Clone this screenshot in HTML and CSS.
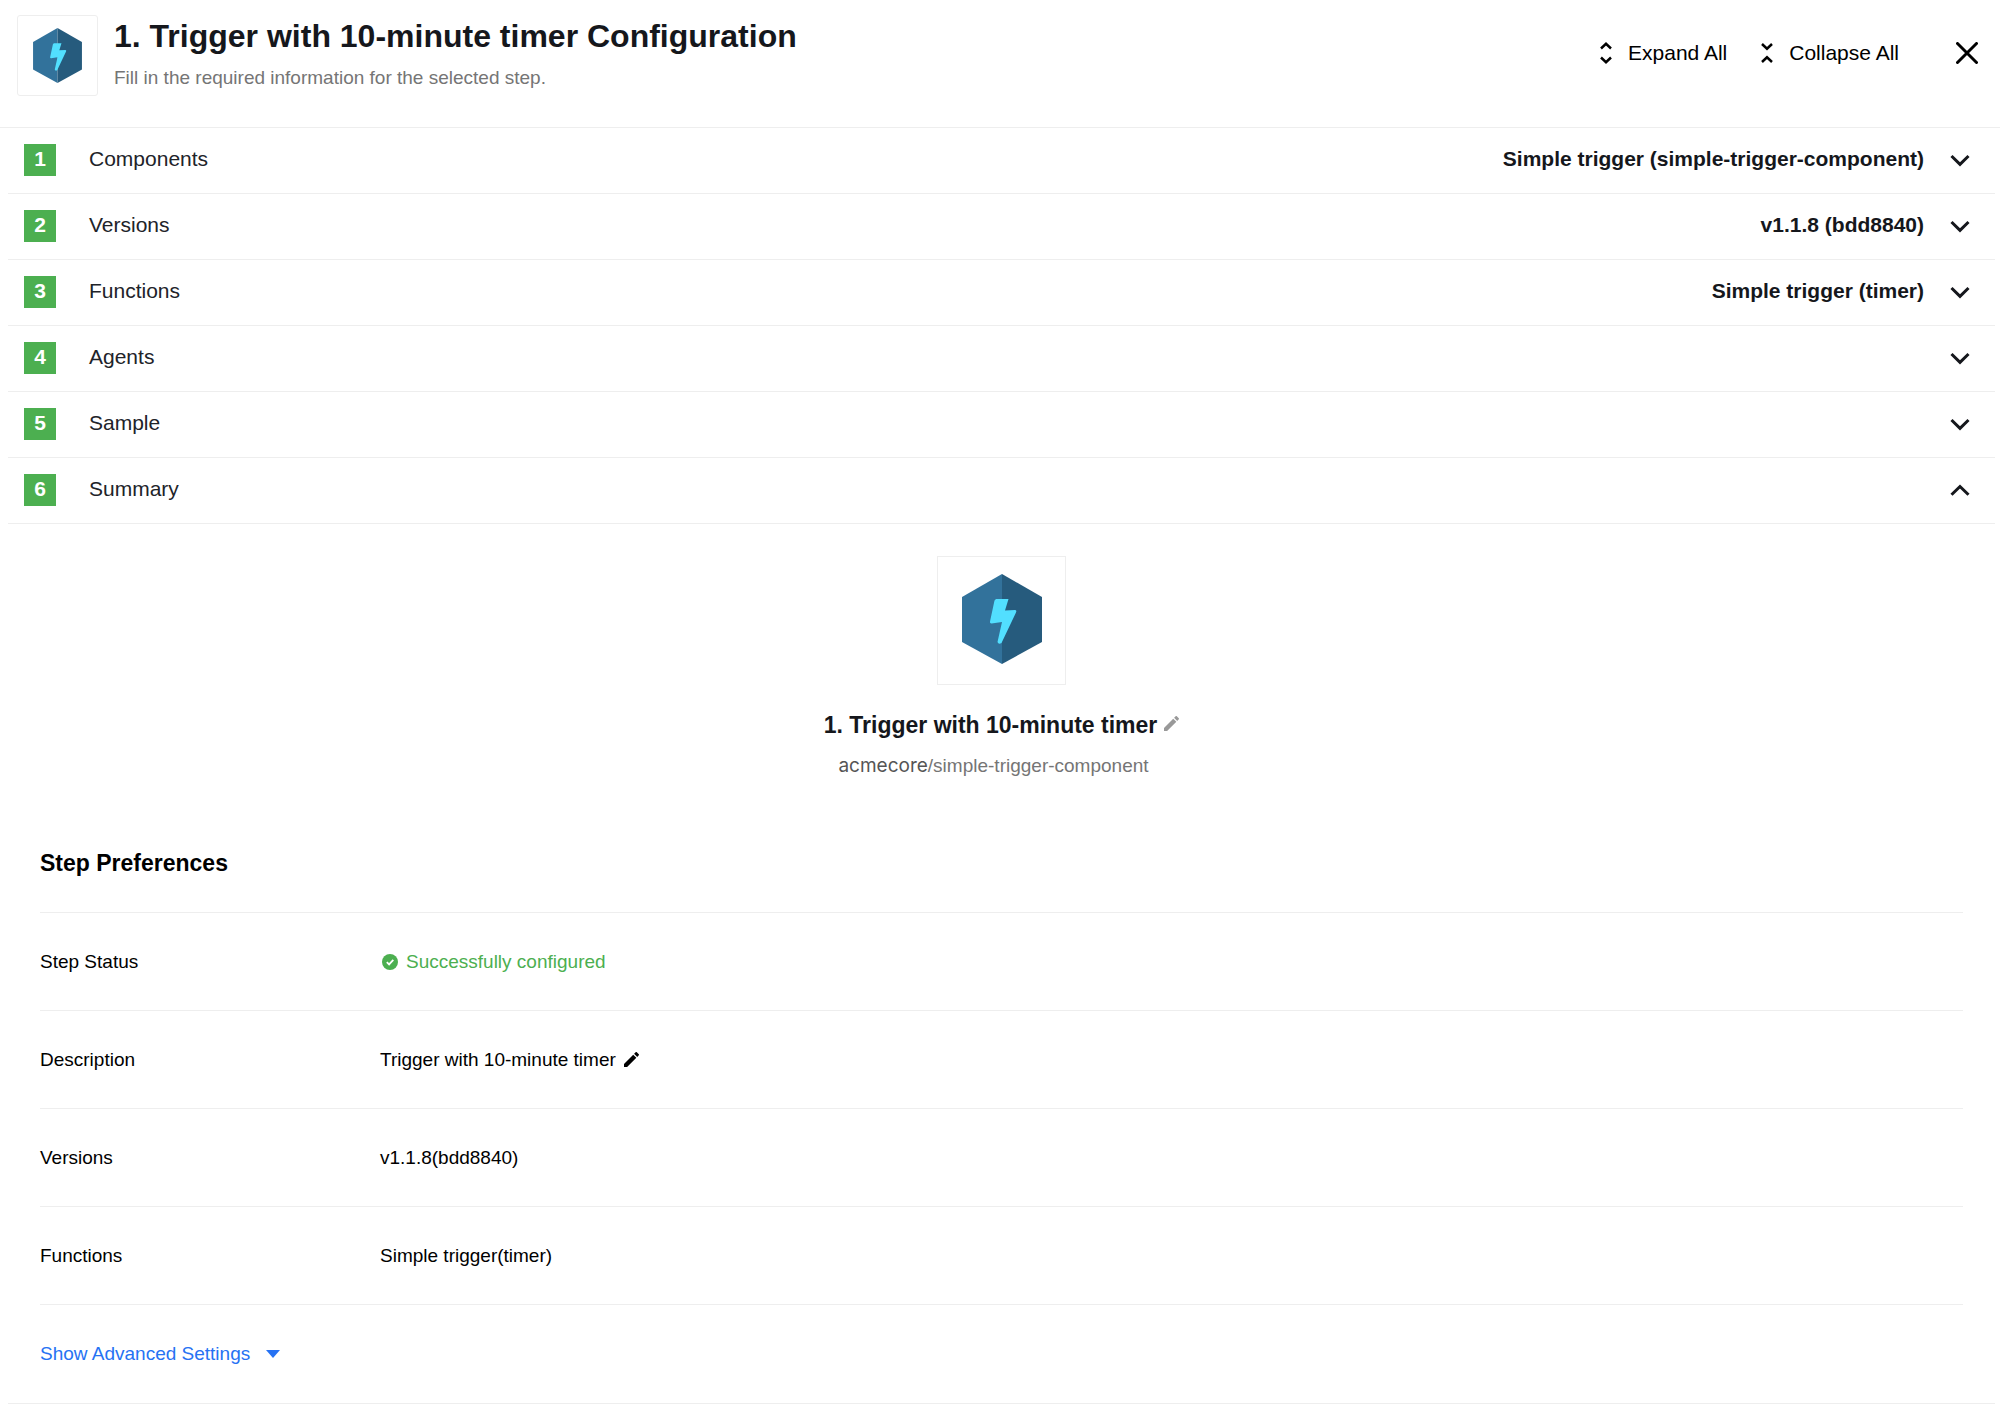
FILE: index.html
```html
<!DOCTYPE html>
<html lang="en">
<head>
<meta charset="utf-8">
<meta name="viewport" content="width=device-width, initial-scale=1">
<title>Step Configuration</title>
<link rel="stylesheet" href="styles.css">
</head>
<body>
<svg class="defs" aria-hidden="true">
  <symbol id="trigger" viewBox="0 0 80 90">
    <path fill="#32729b" d="M40 0 0 23v45l40 22z"/>
    <path fill="#265b7d" d="M40 0l40 23v45L40 90z"/>
    <path fill="#52dfff" d="M34 25h12.500l-3.500 11.500 10-.5q2 0 1 2.500L39.500 69q-3 2-4-1l4.500-20-10.500 1.500q-2 0-1.500-2l4.500-21z"/>
  </symbol>
  <symbol id="down" viewBox="0 0 20 14"><path fill="none" stroke="currentColor" stroke-width="3" d="M1.500 3 10 11.300 18.500 3"/></symbol>
  <symbol id="up" viewBox="0 0 20 14"><path fill="none" stroke="currentColor" stroke-width="3" d="M1.500 11.800 10 3.500 18.500 11.800"/></symbol>
  <symbol id="pencil" viewBox="3 3 18 18"><path fill="currentColor" d="M3 17.250V21h3.750L17.810 9.940l-3.750-3.750L3 17.250zM20.710 7.040a1 1 0 0 0 0-1.410l-2.340-2.340a1 1 0 0 0-1.410 0l-1.830 1.830 3.750 3.750 1.830-1.830z"/></symbol>
</svg>

<header class="header">
  <div class="header-icon"><svg class="hex-small"><use href="#trigger"/></svg></div>
  <div class="header-text">
    <h1 class="title">1. Trigger with 10-minute timer Configuration</h1>
    <p class="subtitle">Fill in the required information for the selected step.</p>
  </div>
  <div class="actions">
    <button class="action" type="button">
      <svg class="action-icon" viewBox="0 0 12 22"><path fill="none" stroke="currentColor" stroke-width="2.500" d="M1 6.500 6 1.800l5 4.700M1 15.500l5 4.700 5-4.700"/></svg>
      Expand All
    </button>
    <button class="action" type="button">
      <svg class="action-icon" viewBox="0 0 12 22"><path fill="none" stroke="currentColor" stroke-width="2.500" d="M1 2l5 4.700L11 2M1 20l5-4.700 5 4.700"/></svg>
      Collapse All
    </button>
    <button class="close" type="button" aria-label="Close">
      <svg class="close-icon" viewBox="0 0 22 22"><path fill="none" stroke="currentColor" stroke-width="3" stroke-linecap="round" d="M1.500 1.500l19 19M20.500 1.500l-19 19"/></svg>
    </button>
  </div>
</header>

<main class="steps">
  <button class="step" type="button"><span class="num">1</span><span class="name">Components</span><span class="value">Simple trigger (simple-trigger-component)</span><svg class="chevron"><use href="#down"/></svg></button>
  <button class="step" type="button"><span class="num">2</span><span class="name">Versions</span><span class="value">v1.1.8 (bdd8840)</span><svg class="chevron"><use href="#down"/></svg></button>
  <button class="step" type="button"><span class="num">3</span><span class="name">Functions</span><span class="value">Simple trigger (timer)</span><svg class="chevron"><use href="#down"/></svg></button>
  <button class="step" type="button"><span class="num">4</span><span class="name">Agents</span><svg class="chevron"><use href="#down"/></svg></button>
  <button class="step" type="button"><span class="num">5</span><span class="name">Sample</span><svg class="chevron"><use href="#down"/></svg></button>
  <button class="step" type="button" aria-expanded="true"><span class="num">6</span><span class="name">Summary</span><svg class="chevron"><use href="#up"/></svg></button>

  <section class="summary">
    <div class="intro">
      <div class="intro-icon"><svg class="hex-large"><use href="#trigger"/></svg></div>
      <div class="intro-name">
        <h2 class="heading">1. Trigger with 10-minute timer</h2>
        <button class="edit edit-muted" type="button" aria-label="Edit name"><svg class="pencil"><use href="#pencil"/></svg></button>
      </div>
      <p class="path"><span class="owner">acmecore</span>/simple-trigger-component</p>
    </div>

    <div class="prefs">
      <h2 class="heading prefs-title">Step Preferences</h2>
      <dl class="list">
        <div class="row"><dt class="label">Step Status</dt><dd class="data status"><svg class="check" viewBox="0 0 18 18"><circle cx="10" cy="9" r="8" fill="currentColor"/><path fill="none" stroke="#fff" stroke-width="1.800" d="M6.800 9.200l2.300 2.200 4.200-4.500"/></svg>Successfully configured</dd></div>
        <div class="row"><dt class="label">Description</dt><dd class="data">Trigger with 10-minute timer<button class="edit" type="button" aria-label="Edit description"><svg class="pencil"><use href="#pencil"/></svg></button></dd></div>
        <div class="row"><dt class="label">Versions</dt><dd class="data">v1.1.8(bdd8840)</dd></div>
        <div class="row"><dt class="label">Functions</dt><dd class="data">Simple trigger(timer)</dd></div>
      </dl>
      <button class="advanced" type="button">Show Advanced Settings<svg class="caret" viewBox="0 0 14 8"><path fill="currentColor" d="M0 0h14L7 8z"/></svg></button>
    </div>
  </section>
</main>
</body>
</html>
```
FILE: styles.css
```css
* { box-sizing: border-box; }
body { margin: 0; background: #fff; color: #000; font: 19px/24px "Liberation Sans", Arial, sans-serif; }
h1, h2, p, dl, dd { margin: 0; }
button { padding: 0; border: 0; background: none; color: inherit; font: inherit; cursor: pointer; }
svg { display: block; flex: none; }
.defs { position: absolute; width: 0; height: 0; }

.header { display: flex; align-items: flex-start; gap: 16px; padding: 15px 22px 31px 17px; border-bottom: 1px solid #eee; }
.header-icon { display: flex; align-items: center; justify-content: center; width: 81px; height: 81px; border: 1px solid #eee; border-radius: 3px; }
.hex-small { width: 49px; height: 55px; }
.header-text { flex: 1; }
.title { color: #15171c; font-size: 32px; line-height: 42px; }
.subtitle { margin-top: 9px; color: #757575; }
.actions { display: flex; align-items: center; gap: 34px; height: 76px; font-size: 21px; }
.action { display: flex; align-items: center; gap: 16px; }
.action-icon { width: 12px; height: 22px; }
.close { margin-left: 23px; }
.close-icon { width: 22px; height: 22px; }

.steps { padding: 0 5px 0 8px; }
.step { display: flex; align-items: center; width: 100%; height: 66px; padding: 0 25px 2px 16px; border-bottom: 1px solid #eee; color: #15171c; font-size: 21px; text-align: left; }
.num { width: 32px; height: 32px; margin-right: 33px; background: #4caf50; color: #fff; font-weight: bold; line-height: 30px; text-align: center; }
.name { flex: 1; padding-bottom: 2px; color: #212329; }
.value { margin-right: 26px; padding-bottom: 2px; font-weight: bold; }
.chevron { width: 20px; height: 14px; }

.summary { border-bottom: 1px solid #eee; }
.intro { display: flex; flex-direction: column; align-items: center; padding-top: 32px; }
.intro-icon { display: flex; justify-content: center; width: 129px; height: 129px; padding-top: 17px; border: 1px solid #eee; }
.hex-large { width: 80px; height: 90px; }
.intro-name { display: flex; align-items: center; gap: 7px; margin-top: 24px; }
.heading { font-size: 23px; line-height: 32px; }
.intro-name .heading { color: #15171c; }
.edit-muted { padding-bottom: 4px; color: #999; }
.pencil { width: 15px; height: 15px; }
.path { margin-top: 13px; padding-right: 16px; color: #757575; }
.owner { color: #555; font-family: Inter, sans-serif; }

.prefs { padding: 69px 32px 0; }
.prefs-title { padding-bottom: 33px; border-bottom: 1px solid #eee; }
.row { display: flex; align-items: center; height: 98px; border-bottom: 1px solid #eee; }
.label { width: 340px; }
.data { display: flex; align-items: center; gap: 8px; }
.status { color: #4caf50; }
.check { width: 18px; height: 18px; }
.advanced { display: flex; align-items: center; gap: 16px; height: 98px; color: #2672f3; }
.caret { width: 14px; height: 8px; }
```
